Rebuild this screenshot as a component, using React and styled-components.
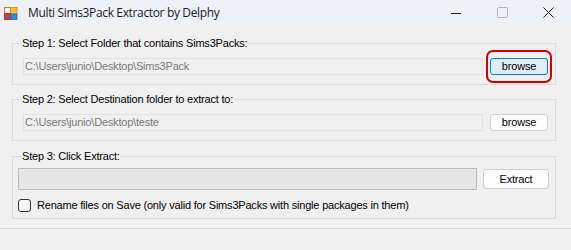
import React from 'react';
import styled, { createGlobalStyle } from 'styled-components';

const GlobalStyle = createGlobalStyle`
  html, body {
    margin: 0;
    padding: 0;
    background: #f0f0f0;
  }
`;

function App() {
  return (
    <>
      <GlobalStyle />
      <Window>
        <TitleBar>
          <AppIcon viewBox="0 0 14 13" width="14" height="13">
            <rect x="0.5" y="0.5" width="6" height="6" fill="#fdf6ea" stroke="#e06a2a" />
            <rect x="6.5" y="0.5" width="6.5" height="6.5" fill="#f6c232" stroke="#e0902a" />
            <rect x="0.5" y="6.5" width="6" height="6" fill="#e0402a" stroke="#c53020" />
            <rect x="2" y="8" width="3" height="3" fill="#2f6fd6" />
            <rect x="7" y="7" width="6" height="5.5" fill="#3a86e0" stroke="#2a66c0" strokeWidth="0.8" />
          </AppIcon>
          <Title>Multi Sims3Pack Extractor by Delphy</Title>
          <Caption>
            <CaptionButton>
              <svg width="10" height="10" viewBox="0 0 10 10">
                <line x1="0" y1="5.5" x2="10" y2="5.5" stroke="#1a1a1a" strokeWidth="1" />
              </svg>
            </CaptionButton>
            <CaptionButton>
              <svg width="11" height="11" viewBox="0 0 11 11">
                <rect x="0.5" y="0.5" width="10" height="10" rx="1" fill="none" stroke="#b4b4b4" strokeWidth="1" />
              </svg>
            </CaptionButton>
            <CaptionButton>
              <svg width="11" height="11" viewBox="0 0 11 11">
                <path d="M0.5 0.5 L10.5 10.5 M10.5 0.5 L0.5 10.5" stroke="#1a1a1a" strokeWidth="1" />
              </svg>
            </CaptionButton>
          </Caption>
        </TitleBar>

        <Body>
          <Group>
            <Legend>Step 1: Select Folder that contains Sims3Packs:</Legend>
            <Row>
              <PathBox>C:\Users\junio\Desktop\Sims3Pack</PathBox>
              <Marked>
                <Button $focused>browse</Button>
              </Marked>
            </Row>
          </Group>

          <Group>
            <Legend>Step 2: Select Destination folder to extract to:</Legend>
            <Row>
              <PathBox>C:\Users\junio\Desktop\teste</PathBox>
              <Button>browse</Button>
            </Row>
          </Group>

          <Group $top={9}>
            <Legend>Step 3: Click Extract:</Legend>
            <ExtractRow>
              <Progress />
              <Button $wide>Extract</Button>
            </ExtractRow>
            <CheckRow>
              <Check />
              <CheckLabel>Rename files on Save (only valid for Sims3Packs with single packages in them)</CheckLabel>
            </CheckRow>
          </Group>
        </Body>

        <Footer />
      </Window>
    </>
  );
}

const Window = styled.div`
  width: 571px;
  height: 250px;
  background: #f0f0f0;
  display: flex;
  flex-direction: column;
  font-family: 'Liberation Sans', Arial, sans-serif;
  font-size: 11px;
  letter-spacing: -0.2px;
  color: #000;
  overflow: hidden;
`;

const TitleBar = styled.div`
  height: 25px;
  background: #eff1f8;
  display: flex;
  align-items: center;
  padding-left: 4px;
`;

const AppIcon = styled.svg`
  margin-top: 1px;
  flex: none;
`;

const Title = styled.span`
  margin-left: 10px;
  font-family: 'Open Sans', 'Noto Sans', sans-serif;
  font-size: 12px;
  letter-spacing: -0.35px;
  color: #1a1a1a;
  flex: 1;
`;

const Caption = styled.div`
  display: flex;
  height: 100%;
`;

const CaptionButton = styled.div`
  width: 46px;
  height: 100%;
  display: flex;
  align-items: center;
  justify-content: center;
`;

const Body = styled.div`
  padding: 12px 15px 0 12px;
  display: flex;
  flex-direction: column;
`;

const Group = styled.fieldset`
  margin: ${p => p.$top ?? 8}px 0 0;
  padding: 0;
  border: 1px solid #dcdcdc;
  min-width: 0;
  &:first-child {
    margin-top: 0;
  }
`;

const Legend = styled.legend`
  margin-left: 8px;
  padding: 0 1px;
  line-height: 12px;
  font-size: 11px;
  color: #000;
`;

const Row = styled.div`
  display: flex;
  align-items: center;
  height: 18px;
  padding: 8px 7px 9px 10px;
  gap: 7px;
`;

const PathBox = styled.div`
  flex: 1;
  height: 17px;
  box-sizing: border-box;
  border: 1px solid #e2e2e2;
  padding: 0 1px;
  line-height: 15px;
  color: #7a7a7a;
  white-space: nowrap;
`;

const Button = styled.button`
  width: ${p => (p.$wide ? 66 : 58)}px;
  height: ${p => (p.$wide ? 20 : 17)}px;
  box-sizing: border-box;
  padding: 0;
  font-family: inherit;
  font-size: 11px;
  letter-spacing: -0.2px;
  color: #000;
  border-radius: 3px;
  border: 1px solid ${p => (p.$focused ? '#1479d4' : '#d0d0d0')};
  background: ${p => (p.$focused ? '#e0eef9' : '#fdfdfd')};
`;

const Marked = styled.span`
  position: relative;
  display: flex;
  &::after {
    content: '';
    position: absolute;
    inset: -8px -4px -8px -4px;
    border: 2px solid #d10000;
    border-radius: 7px;
  }
`;

const ExtractRow = styled.div`
  display: flex;
  align-items: center;
  padding: 6px 6px 0 5px;
  gap: 6px;
`;

const Progress = styled.div`
  flex: 1;
  height: 22px;
  box-sizing: border-box;
  border: 1px solid #bcbcbc;
  background: #e6e6e6;
`;

const CheckRow = styled.div`
  display: flex;
  align-items: center;
  gap: 6px;
  padding: 9px 5px 6px 5px;
`;

const Check = styled.span`
  width: 13px;
  height: 13px;
  box-sizing: border-box;
  border: 1px solid #333;
  border-radius: 3px;
  background: #f7f7f7;
  flex: none;
`;

const CheckLabel = styled.span`
  line-height: 13px;
  white-space: nowrap;
`;

const Footer = styled.div`
  margin-top: auto;
  height: 21px;
  border-top: 1px solid #dadada;
`;

export default App;
